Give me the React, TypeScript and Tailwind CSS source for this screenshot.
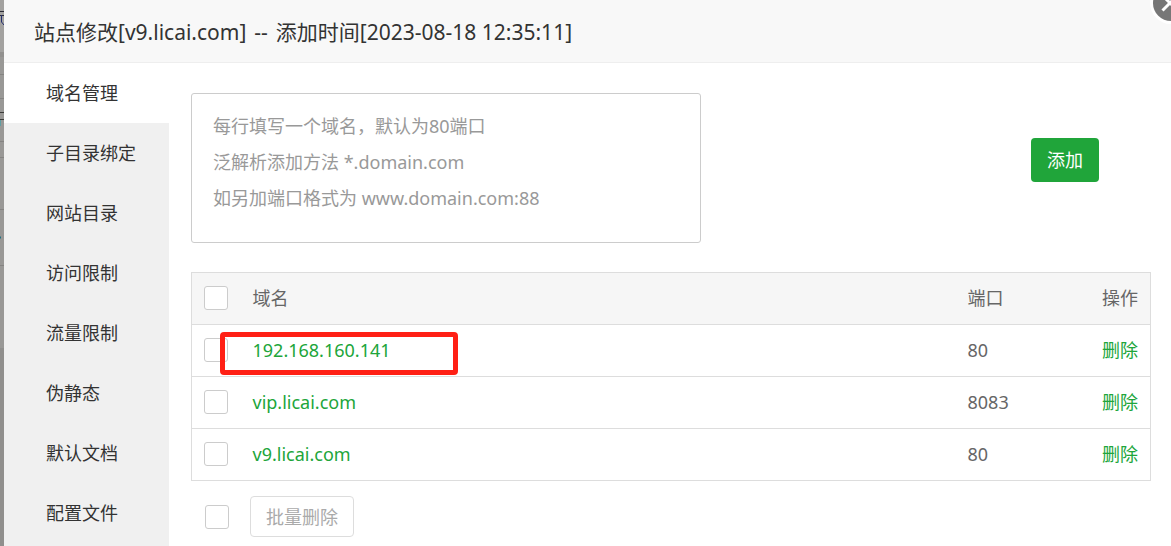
import React, { useState } from "react";

const NAV = ["域名管理", "子目录绑定", "网站目录", "访问限制", "流量限制", "伪静态", "默认文档", "配置文件"];

const DOMAINS = [
  { name: "192.168.160.141", port: 80, marked: true },
  { name: "vip.licai.com", port: 8083, marked: false },
  { name: "v9.licai.com", port: 80, marked: false },
];

const PLACEHOLDER = "每行填写一个域名，默认为80端口\n泛解析添加方法 *.domain.com\n如另加端口格式为 www.domain.com:88";

function Check({ label }: { label: string }) {
  return (
    <input
      type="checkbox"
      aria-label={label}
      className="block size-6 shrink-0 appearance-none rounded-[3px] border border-[#ccc] bg-white checked:bg-[#20a53a]"
    />
  );
}

function Backdrop() {
  return (
    <svg className="w-1 shrink-0 self-stretch bg-[#999896]" width="4" aria-hidden="true">
      <rect width="4" height="52" fill="#a3a2a0" />
      <rect width="4" height="5" y="52" fill="#92918f" />
      <path d="M0 11.5h4M0 15.5h4" stroke="#2b2b35" />
      <path d="M1.5 15v7l2.5 3" stroke="#26306e" fill="none" />
      <path d="M0 74.5h4M0 98.5h4M0 141.5h4M0 157.5h4M0 209.5h4M0 265.5h4" stroke="#858482" />
      <path d="M0 112.5h4M0 119.5h4" stroke="#3c3c3a" />
      <path d="M0.5 120v6" stroke="#5f9ea3" />
      <path d="M0 237.5h1" stroke="#207080" strokeWidth="2" />
      <rect y="348" width="4" height="2000" fill="#908f8d" />
    </svg>
  );
}

export default function App() {
  const [active, setActive] = useState(0);

  return (
    <div className="flex min-h-screen overflow-hidden bg-[#999896] font-['Noto_Sans','Noto_Sans_CJK_SC',sans-serif] text-lg/6 text-[#333]">
      <Backdrop />
      <section className="relative flex min-w-0 flex-1 flex-col rounded-tl-[2px] bg-white">
        <header className="flex h-[63px] items-center border-b border-[#eee] bg-[#f8f8f8] px-[30px] pt-0.5">
          <h1 className="flex gap-2 text-[21px]/7">
            <span>站点修改[v9.licai.com]</span>
            <span>--</span>
            <span>添加时间[2023-08-18 12:35:11]</span>
          </h1>
        </header>
        <button type="button" aria-label="关闭" className="absolute -top-[18px] -right-[21px] size-[42px]">
          <svg viewBox="0 0 42 42" className="size-full">
            <circle cx="21" cy="21" r="21" fill="#fff" />
            <circle cx="21" cy="21" r="18" fill="#777" />
            <path d="M12.5 28.5l15-15M12.5 13.5l15 15" stroke="#fff" strokeWidth="3" />
          </svg>
        </button>

        <div className="flex flex-1">
          <nav className="w-[165px] shrink-0 bg-[#f0f0f0]">
            {NAV.map((item, i) => (
              <button
                key={item}
                type="button"
                onClick={() => setActive(i)}
                className={`flex h-[60px] w-full items-center pl-[42px] text-left ${i === active ? "bg-white" : ""}`}
              >
                {item}
              </button>
            ))}
          </nav>

          <main className="min-w-0 flex-1 pt-[30px] pr-5 pl-[22px]">
            <div className="flex items-center justify-between pr-[52px]">
              <textarea
                aria-label="域名"
                placeholder={PLACEHOLDER}
                className="block h-[150px] w-[510px] resize-none overflow-hidden rounded-[3px] border border-[#ccc] px-[21px] py-[14px] leading-9 placeholder:text-[#999]"
              />
              <button type="button" className="mb-4 h-11 w-[68px] shrink-0 rounded-[4px] bg-[#20a53a] text-white">
                添加
              </button>
            </div>

            <table className="mt-[29px] w-full table-fixed border-collapse border border-[#ddd] text-left text-[#666]">
              <thead className="bg-[#f6f6f6]">
                <tr className="h-[52px]">
                  <th className="w-12 p-0 pb-0.5 pl-3 font-normal"><Check label="全选" /></th>
                  <th className="p-0 pb-0.5 pl-[13px] font-normal">域名</th>
                  <th className="w-[119px] p-0 pb-0.5 font-normal">端口</th>
                  <th className="w-16 p-0 pr-3 pb-0.5 text-right font-normal">操作</th>
                </tr>
              </thead>
              <tbody>
                {DOMAINS.map((d) => (
                  <tr key={d.name} className="h-[52px] border-t border-[#ddd]">
                    <td className="p-0 pb-0.5 pl-3"><Check label={d.name} /></td>
                    <td className="relative p-0 pb-0.5 pl-[13px]">
                      <a href="#" className="text-[#20a53a]">{d.name}</a>
                      {d.marked && (
                        <span className="pointer-events-none absolute top-[7px] -left-5 h-[43px] w-[238px] rounded-[4px] border-5 border-[#ff2015]" />
                      )}
                    </td>
                    <td className="p-0 pb-0.5">{d.port}</td>
                    <td className="p-0 pr-3 pb-0.5 text-right">
                      <a href="#" className="text-[#20a53a]">删除</a>
                    </td>
                  </tr>
                ))}
              </tbody>
            </table>

            <div className="mt-[15px] flex items-center gap-[21px] pl-[14px]">
              <Check label="选择全部域名" />
              <button type="button" disabled className="h-[41px] rounded-[4px] border border-[#ddd] px-[15px] text-[#aaa]">
                批量删除
              </button>
            </div>
          </main>
        </div>
      </section>
    </div>
  );
}
